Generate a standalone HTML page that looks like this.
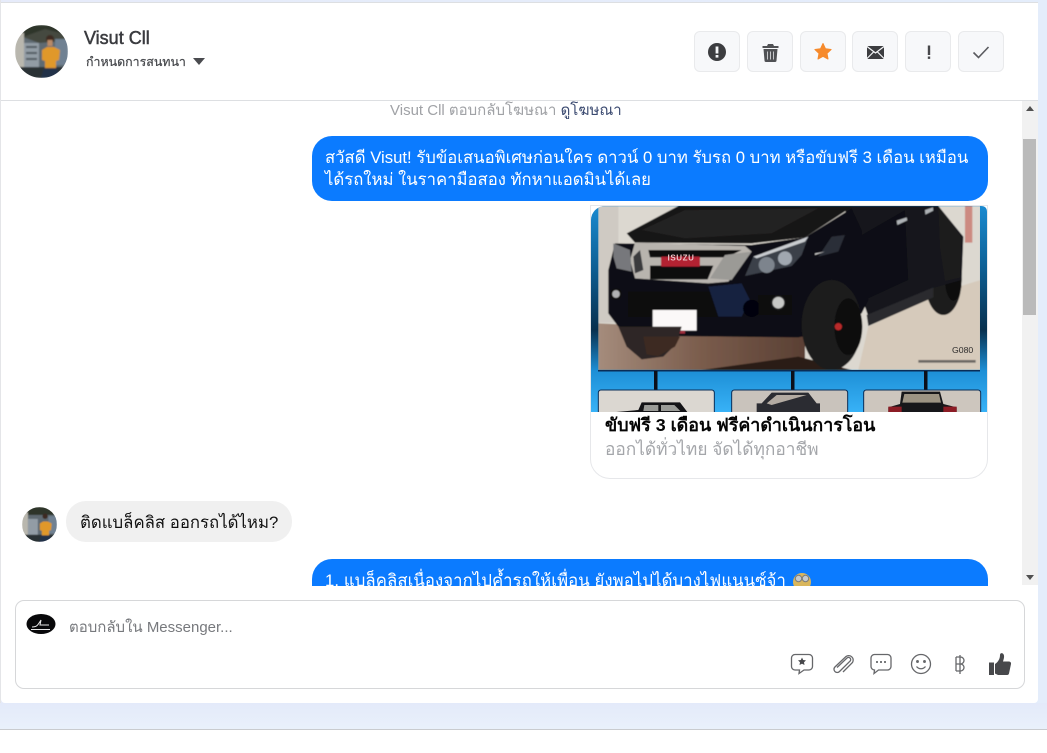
<!DOCTYPE html>
<html><head><meta charset="utf-8">
<style>
*{box-sizing:border-box}
html,body{margin:0;padding:0;width:1047px;height:753px;overflow:hidden;background:#fff;font-family:"Liberation Sans","Noto Sans CJK SC",sans-serif}
.a{position:absolute}
.t{position:absolute;white-space:nowrap}
.btn{position:absolute;top:31px;width:46px;height:41px;background:#f7f8fa;border:1px solid #e9eaec;border-radius:6px}
.btn svg{position:absolute;left:0;top:0}
</style></head><body>
<div class="a" style="left:0;top:0;width:1047px;height:729px;background:linear-gradient(90deg,#e6ebfa,#e4edfb)"></div>
<div class="a" style="left:0;top:703px;width:1047px;height:26px;background:linear-gradient(180deg,#e3eafa,#e9f0fb)"></div>
<div class="a" style="left:0;top:729px;width:1047px;height:1px;background:#c9cbcf"></div>
<div class="a" style="left:1px;top:2px;width:1037px;height:701px;background:#fff;border-radius:0 0 4px 4px"></div>
<div class="a" style="left:0;top:0;width:1px;height:703px;background:#e4e5e8"></div>
<div class="a" style="left:1px;top:2px;width:1037px;height:1px;background:#dddfe2"></div>
<div class="a" style="left:1px;top:100px;width:1037px;height:1px;background:#dddfe2"></div>

<svg class="a" style="left:15px;top:25px" width="53" height="53" viewBox="0 0 53 53">
<defs><clipPath id="c1"><circle cx="26.500" cy="26.500" r="26.500"/></clipPath><filter id="b1"><feGaussianBlur stdDeviation=".7"/></filter></defs>
<g clip-path="url(#c1)"><g filter="url(#b1)"><rect width="53" height="53" fill="#5f6a72"/><rect width="53" height="12" fill="#2f342c"/><path d="M8 12L30 4 53 10v6L24 18z" fill="#454940"/><rect x="0" y="8" width="9" height="45" fill="#b9b7ae"/><rect x="9" y="18" width="15" height="26" fill="#929ca5"/><path d="M11 22h11M11 28h11M11 34h11" stroke="#4e565d" stroke-width="2"/><rect x="40" y="14" width="13" height="26" fill="#6f8192"/><rect x="0" y="42" width="53" height="11" fill="#2c3236"/><circle cx="35" cy="14" r="4" fill="#3e2a20"/><rect x="32.500" y="15" width="5" height="6" fill="#b98a68"/><path d="M27 25l5-3h7l6 3-1 10-3 1v8H30v-8l-3-1z" fill="#e0982a"/><path d="M29 43h13l3 10H26z" fill="#22324a"/></g></g></svg>
<div class="t" style="left:84px;top:28px;font-size:18px;color:#3a3b3f;-webkit-text-stroke:.5px #3a3b3f">Visut Cll</div>
<div class="t" style="left:86px;top:53px;font-size:12.400px;color:#44464a;-webkit-text-stroke:.2px #44464a">กำหนดการสนทนา</div>
<svg class="a" style="left:193px;top:58px" width="12" height="7"><path d="M0 0h12L6 7z" fill="#4a4b4f"/></svg>

<div class="btn" style="left:694px"><svg width="46" height="41"><circle cx="22" cy="20" r="9" fill="#3c3d40"/><rect x="20.600" y="14.500" width="2.800" height="7" fill="#f6f7f9"/><rect x="20.600" y="23" width="2.800" height="2.600" fill="#f6f7f9"/></svg></div>
<div class="btn" style="left:747px"><svg width="46" height="41"><path d="M14.500 14h4.500l1-2h5l1 2h4.500v2h-16z" fill="#505154"/><path d="M15.500 17h14l-1 11.500a1.500 1.500 0 0 1-1.500 1.500H18a1.500 1.500 0 0 1-1.500-1.500z" fill="#505154"/><path d="M19.500 19.500v8M22.500 19.500v8M25.500 19.500v8" stroke="#c6c7ca" stroke-width="1"/></svg></div>
<div class="btn" style="left:800px"><svg width="46" height="41"><path d="M22 11.500l2.500 5.300 5.600.7-4.100 3.900 1 5.600L22 24.300l-5 2.700 1-5.600-4.100-3.900 5.600-.7z" fill="#f68a2c" stroke="#f68a2c" stroke-linejoin="round"/></svg></div>
<div class="btn" style="left:852px"><svg width="46" height="41"><rect x="14" y="14" width="17" height="13" rx="1" fill="#3c3d40"/><path d="M14 14.500l8.500 6.500 8.500-6.500M14 26.500l6.500-6.500M31 26.500L24.500 20" stroke="#f6f7f9" stroke-width="1.200" fill="none"/></svg></div>
<div class="btn" style="left:905px"><svg width="46" height="41"><rect x="21.800" y="13.500" width="2.400" height="9.500" fill="#47484b"/><rect x="21.800" y="24.500" width="2.400" height="2.400" fill="#47484b"/></svg></div>
<div class="btn" style="left:958px"><svg width="46" height="41"><path d="M14.500 20.500l5 5 10-10.500" stroke="#5a5b5f" stroke-width="1.600" fill="none"/></svg></div>

<!-- scrollbar -->
<div class="a" style="left:1022px;top:101px;width:16px;height:484px;background:#f1f1f1"></div>
<div class="a" style="left:1023px;top:139px;width:13px;height:176px;background:#bababa"></div>
<svg class="a" style="left:1026px;top:106px" width="8" height="5"><path d="M0 5h8L4 0z" fill="#505050"/></svg>
<svg class="a" style="left:1026px;top:575px" width="8" height="5"><path d="M0 0h8L4 5z" fill="#505050"/></svg>

<div class="t" style="left:390px;top:98px;font-size:15px;color:#a0a2a6">Visut Cll ตอบกลับโฆษณา <span style="color:#3b4a70">ดูโฆษณา</span></div>

<div class="a" style="left:312px;top:136px;width:676px;height:65px;background:#0b7bff;border-radius:20px"></div>
<div class="t" style="left:325px;top:145px;font-size:16.700px;color:#fff">สวัสดี Visut! รับข้อเสนอพิเศษก่อนใคร ดาวน์ 0 บาท รับรถ 0 บาท หรือขับฟรี 3 เดือน เหมือน</div>
<div class="t" style="left:325px;top:167px;font-size:16.700px;color:#fff">ได้รถใหม่ ในราคามือสอง ทักหาแอดมินได้เลย</div>

<!-- card -->
<div class="a" style="left:590px;top:205px;width:398px;height:274px;border:1px solid #e6e7ea;border-radius:0 0 20px 20px;background:#fff"></div>
<svg class="a" style="left:591px;top:206px" width="396" height="206" viewBox="0 0 396 206">
<defs>
<linearGradient id="bg" x1="0" y1="0" x2="0" y2="1"><stop offset="0" stop-color="#1a8ad0"/><stop offset=".3" stop-color="#0d5f94"/><stop offset=".6" stop-color="#08304e"/><stop offset=".8" stop-color="#1d8fd6"/><stop offset="1" stop-color="#38b2f7"/></linearGradient>
<linearGradient id="fl" x1="0" y1="0" x2="1" y2="0"><stop offset="0" stop-color="#a58c7c"/><stop offset=".5" stop-color="#7a5c4c"/><stop offset="1" stop-color="#5a4034"/></linearGradient>
<clipPath id="ph"><path d="M7 0h382v164H7z"/></clipPath>
<clipPath id="rc"><path d="M14 0H390Q396 0 396 6V206H0V14A14 14 0 0 1 14 0Z"/></clipPath>
<filter id="b2"><feGaussianBlur stdDeviation="1.500"/></filter>
</defs>
<g clip-path="url(#rc)">
<rect width="396" height="206" fill="url(#bg)"/>
<g clip-path="url(#ph)">
<g transform="translate(-6 -6) scale(.33333)" filter="url(#b2)">
<rect x="40" y="18" width="1147" height="492" fill="#dcd8d0"/>
<rect x="40" y="18" width="60" height="350" fill="#cfcac3"/>
<path d="M40 370L660 400V510H40z" fill="url(#fl)"/>
<path d="M820 510L850 380 1040 285 1187 240V510z" fill="#d6cabb"/>
<path d="M350 510L640 470 800 510z" fill="#2a1d18"/>
<path d="M1140 18h22v110h-22z" fill="#c56a5f" opacity=".7"/>
<!-- rear wheel -->
<ellipse cx="1075" cy="240" rx="55" ry="105" fill="#1d1d1e"/><ellipse cx="1105" cy="240" rx="25" ry="62" fill="#08080a"/>
<!-- doors -->
<path d="M780 18H1060L1135 110 1130 240 1040 265 850 350 800 200z" fill="#15161b"/>
<path d="M960 30l10 210 -120 55-20-190z" fill="#0f1015"/>
<path d="M1060 18l70 95-5 120-45 10-15-100z" fill="#1d1c1f"/>
<path d="M935 62l30-10 2 9-30 14zM1020 30l24-8 1 10-24 12z" fill="#aeb2b6"/>
<!-- running board -->
<path d="M845 345L1045 262V292L850 378z" fill="#2a2b2f"/>
<!-- hood -->
<path d="M125 100L280 18H805L660 112 500 130 150 128z" fill="#181717"/>
<path d="M170 90L300 30 700 25 560 100 300 115z" fill="#232020"/>
<path d="M500 135L660 112 800 25 830 90 850 300 830 340 700 400 640 412 250 408 100 380 70 340 70 210 90 130z" fill="#0e0e12"/>
<path d="M700 170l40-60 40-5-20 50z" fill="#2a2d37"/>
<path d="M690 160l30-5-30 10z" fill="#cfcfcf"/>
<!-- chrome + grille -->
<path d="M150 128L480 138 500 155 430 245 370 250 150 235 135 180z" fill="#b8b4ae"/>
<path d="M190 150H470L425 172H195zM195 197H385L368 238H195z" fill="#0b0b0e"/>
<path d="M145 170l20-20 10 60-25 10z" fill="#3b3b3e"/>
<rect x="228" y="170" width="117" height="30" rx="3" fill="#b32433"/>
<path d="M375 235L420 165 500 155 440 240z" fill="#9b9a96"/>
<path d="M85 130L135 150 140 215 95 205 85 170z" fill="#77787b"/>
<!-- headlight -->
<path d="M480 228L505 170 670 110 650 165 620 198z" fill="#3a3f49"/>
<path d="M505 170L670 110 660 125 515 175z" fill="#c9ccd0"/>
<circle cx="545" cy="195" r="24" fill="#7d848d"/><circle cx="600" cy="175" r="21" fill="#a0a7b0"/>
<!-- bumper details -->
<path d="M130 275H460L440 350H130z" fill="#08080b"/>
<path d="M370 260L470 250 495 300 470 350 400 350z" fill="#15233f"/>
<circle cx="500" cy="325" r="26" fill="#05050a"/>
<path d="M520 285H620V345H520z" fill="#08080c"/>
<circle cx="580" cy="308" r="20" fill="#c7c8c6" stroke="#1a1b1f" stroke-width="5"/>
<circle cx="93" cy="282" r="14" fill="#b0b1b3" stroke="#111" stroke-width="5"/>
<rect x="203" y="330" width="132" height="62" fill="#fbf8f8"/>
<rect x="240" y="392" width="60" height="9" fill="#a12e3d"/>
<!-- wheels -->
<path d="M100 380H290L275 430 235 470 170 478 125 440z" fill="#2d2725"/>
<path d="M175 410h110l-15 30-50 28-35-5z" fill="#3d2b22"/>
<ellipse cx="740" cy="375" rx="90" ry="135" fill="#1c1c1d"/>
<ellipse cx="790" cy="380" rx="42" ry="85" fill="#08080a"/>
<circle cx="760" cy="380" r="11" fill="#b92a2a"/>
<rect x="1000" y="480" width="172" height="8" fill="#3f3f3f" opacity=".7"/>
</g>
<text x="76.500" y="54.500" font-size="8" font-weight="700" fill="#e9c3c7" letter-spacing=".6">ISUZU</text>
<text x="361" y="147" font-size="8.700" fill="#2c2b2b">G080</text>
</g>
<rect x="7" y="164" width="382" height="1.500" fill="#0a2d57"/>
<rect x="63" y="165" width="3.500" height="20" fill="#0c0f1a"/><rect x="200" y="165" width="3.500" height="20" fill="#0c0f1a"/><rect x="333" y="165" width="3.500" height="20" fill="#0c0f1a"/>
<g transform="translate(-6 -6) scale(.33333)">
<rect x="40" y="570" width="348" height="90" rx="8" fill="#dbd7d1" stroke="#0a2d57" stroke-width="3"/>
<rect x="440" y="570" width="348" height="90" rx="8" fill="#c9c3bc" stroke="#0a2d57" stroke-width="3"/>
<rect x="836" y="570" width="351" height="90" rx="8" fill="#cdc6be" stroke="#0a2d57" stroke-width="3"/>
<path d="M50 640L160 630 170 607H285L310 640z" fill="#131316"/><path d="M178 615h42v18h-45zM228 615h40l18 18h-58z" fill="#9a9b97"/>
<path d="M515 640V610H530L560 578H670L695 610H705V640z" fill="#2b2c32"/><path d="M545 610L575 585H665L560 615z" fill="#b3aba2"/>
<path d="M910 640V622L945 612 950 575H1065L1075 612 1115 622V640z" fill="#17171a"/><path d="M958 582H1062L1068 608H952z" fill="#9d9484"/><path d="M910 620h40v20h-40zM1075 620h40v20h-40z" fill="#8c1c25"/>
</g>
</g></svg>
<div class="t" style="left:605px;top:410px;font-size:17.850px;font-weight:700;color:#050505">ขับฟรี 3 เดือน ฟรีค่าดำเนินการโอน</div>
<div class="t" style="left:605px;top:435px;font-size:17.300px;color:#a4a6aa">ออกได้ทั่วไทย จัดได้ทุกอาชีพ</div>

<!-- received -->
<svg class="a" style="left:22px;top:507px" width="35" height="35" viewBox="0 0 53 53">
<defs><clipPath id="c2"><circle cx="26.500" cy="26.500" r="26.500"/></clipPath></defs>
<g clip-path="url(#c2)"><g filter="url(#b1)"><rect width="53" height="53" fill="#5f6a72"/><rect width="53" height="12" fill="#2f342c"/><rect x="0" y="8" width="9" height="45" fill="#b9b7ae"/><rect x="9" y="18" width="15" height="26" fill="#929ca5"/><rect x="40" y="14" width="13" height="26" fill="#6f8192"/><rect x="0" y="42" width="53" height="11" fill="#2c3236"/><circle cx="35" cy="14" r="4" fill="#3e2a20"/><path d="M27 25l5-3h7l6 3-1 10-3 1v8H30v-8l-3-1z" fill="#e0982a"/><path d="M29 43h13l3 10H26z" fill="#22324a"/></g></g></svg>
<div class="a" style="left:66px;top:501px;width:226px;height:41px;background:#f0f0f0;border-radius:20px"></div>
<div class="t" style="left:80px;top:510px;font-size:16.760px;color:#111">ติดแบล็คลิส ออกรถได้ไหม?</div>

<!-- clipped bubble -->
<div class="a" style="left:312px;top:559px;width:676px;height:27px;overflow:hidden">
<div class="a" style="left:0;top:0;width:676px;height:60px;background:#0b7bff;border-radius:20px"></div>
<div class="t" style="left:13px;top:9px;font-size:16.700px;letter-spacing:.1px;color:#fff">1. แบล็คลิสเนื่องจากไปค้ำรถให้เพื่อน ยังพอไปได้บางไฟแนนซ์จ้า</div>
<svg class="a" style="left:480px;top:13px" width="20" height="20"><circle cx="10" cy="10" r="9" fill="#d9b65c"/><circle cx="6.500" cy="6.500" r="3.200" fill="#c6cacc" stroke="#7a7a7a"/><circle cx="13.500" cy="6.500" r="3.200" fill="#c6cacc" stroke="#7a7a7a"/></svg>
</div>

<!-- composer -->
<div class="a" style="left:15px;top:600px;width:1010px;height:89px;border:1px solid #d6d7d9;border-radius:9px;background:#fff"></div>
<svg class="a" style="left:26px;top:614px" width="30" height="20"><ellipse cx="15" cy="10" rx="14.500" ry="10" fill="#08080a"/><path d="M6 13c5 0 6-2 9-7l-1 5h9M5 15.500h19" stroke="#e8e8e8" stroke-width="1" fill="none"/></svg>
<div class="t" style="left:69px;top:615px;font-size:15px;color:#77797d">ตอบกลับใน Messenger...</div>

<svg class="a" style="left:790px;top:652px" width="225" height="26" fill="none" stroke="#66676a" stroke-width="1.300">
<path d="M5 2.500h14a3.500 3.500 0 0 1 3.500 3.500v8.500a3.500 3.500 0 0 1-3.500 3.500h-5l-5 3.500.5-3.500H5a3.500 3.500 0 0 1-3.500-3.500V6A3.500 3.500 0 0 1 5 2.500z"/>
<path d="M12 5.500l1.200 2.500 2.800.4-2 1.900.5 2.700-2.500-1.300-2.500 1.300.5-2.700-2-1.900 2.800-.4z" fill="#47484b" stroke="none"/>
<path d="M47 15.500L57 6a2.200 2.200 0 0 1 3.200 3L49.500 19.500a3.200 3.200 0 0 1-4.600-4.500L56 4.500a4.500 4.500 0 0 1 6.500 6L53 20"/>
<path d="M84.500 2.500h13a3.500 3.500 0 0 1 3.500 3.500v8.500a3.500 3.500 0 0 1-3.500 3.500h-9l-4.500 3.500.5-3.500h0a3.500 3.500 0 0 1-3.500-3.500V6a3.500 3.500 0 0 1 3.500-3.500z"/>
<path d="M86 10h2M90 10h2M94 10h2" stroke-width="1.800"/>
<circle cx="131" cy="12" r="9.500"/><circle cx="127.500" cy="9.500" r=".8" fill="#606164"/><circle cx="134.500" cy="9.500" r=".8" fill="#606164"/><path d="M126.500 14.500c2.500 3 6.500 3 9 0"/>
<path d="M166 5h4.500a3.500 3.500 0 0 1 0 7H166M170.500 12a3.500 3.500 0 0 1 0 7H166M166 5v14M170 3v19"/>
<path d="M199 10.500h5V23h-5z" fill="#47484b" stroke="none"/>
<path d="M205 12c3-2 5-5 5-9 0-2.800 3.500-2.500 4 .5.400 2-.5 4-1 6h6a2 2 0 0 1 2 2.500l-2 9.500a2 2 0 0 1-2 1.500h-9l-3-1.500z" fill="#47484b" stroke="none"/>
</svg>
</body></html>
